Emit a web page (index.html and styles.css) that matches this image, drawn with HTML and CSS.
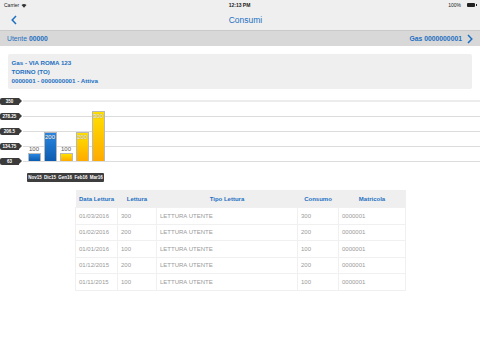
FILE: index.html
```html
<!DOCTYPE html>
<html lang="it">
<head>
    <meta charset="UTF-8">
    <title>Consumi</title>
    <link rel="stylesheet" href="styles.css">
</head>
<body class="body">
<div class="status">
    <span class="carrier">Carrier
        <svg class="wifi" width="6" height="5" viewBox="0 0 12 10"><path d="M6 9.5 L1 4 A7.5 7.5 0 0 1 11 4 Z" fill="#333"/></svg>
    </span>
    <span class="clock">12:13 PM</span>
    <span class="power">100% <span class="batt"></span></span>
</div>

<div class="nav">
    <svg class="back" width="6" height="10" viewBox="0 0 6 10"><path d="M5 1 L1.2 5 L5 9" fill="none" stroke="#1d6fc2" stroke-width="1.5"/></svg>
    <span class="title">Consumi</span>
    <span></span>
</div>

<div class="subbar">
    <span>Utente <b>00000</b></span>
    <span class="gas"><b>Gas 0000000001</b>
        <svg width="6" height="10" viewBox="0 0 6 10"><path d="M1 1 L4.8 5 L1 9" fill="none" stroke="#1d6fc2" stroke-width="1.5"/></svg>
    </span>
</div>

<div class="info">
    <div>Gas - VIA ROMA 123</div>
    <div>TORINO (TO)</div>
    <div>0000001 - 0000000001 - Attiva</div>
</div>

<div class="chart">
    <div class="axis">
        <div class="tick"><span class="pill">350</span><span class="line top"></span></div>
        <div class="tick"><span class="pill">278.25</span><span class="line"></span></div>
        <div class="tick"><span class="pill">206.5</span><span class="line"></span></div>
        <div class="tick"><span class="pill">134.75</span><span class="line"></span></div>
        <div class="tick"><span class="pill">63</span><span class="line"></span></div>
    </div>
    <div class="bars">
        <div class="slot"><span class="val">100</span><div class="bar blue" style="height:8px"></div></div>
        <div class="slot"><div class="bar blue" style="height:29px"><span class="val in">200</span></div></div>
        <div class="slot"><span class="val">100</span><div class="bar yellow" style="height:8px"></div></div>
        <div class="slot"><div class="bar yellow" style="height:29px"><span class="val in">200</span></div></div>
        <div class="slot"><div class="bar yellow" style="height:50px"><span class="val in">300</span></div></div>
    </div>
</div>
<div class="xlabels">
    <span>Nov15</span><span>Dic15</span><span>Gen16</span><span>Feb16</span><span>Mar16</span>
</div>

<table class="letture">
    <thead>
    <tr>
        <th class="c1">Data Lettura</th>
        <th class="c2">Lettura</th>
        <th class="c3">Tipo Lettura</th>
        <th class="c4">Consumo</th>
        <th class="c5">Matricola</th>
    </tr>
    </thead>
    <tbody>
    <tr><td>01/03/2016</td><td>300</td><td>LETTURA UTENTE</td><td>300</td><td>0000001</td></tr>
    <tr><td>01/02/2016</td><td>200</td><td>LETTURA UTENTE</td><td>200</td><td>0000001</td></tr>
    <tr><td>01/01/2016</td><td>100</td><td>LETTURA UTENTE</td><td>100</td><td>0000001</td></tr>
    <tr><td>01/12/2015</td><td>200</td><td>LETTURA UTENTE</td><td>200</td><td>0000001</td></tr>
    <tr><td>01/11/2015</td><td>100</td><td>LETTURA UTENTE</td><td>100</td><td>0000001</td></tr>
    </tbody>
</table>
</body>
</html>
```

FILE: styles.css
```css
.body{
    margin:0;
    width:480px;
    height:360px;
    background:#fff;
    font-family:"Liberation Sans", Helvetica, Arial, sans-serif;
    color:#1d6fc2;
    overflow:hidden;
}
.status{
    height:10px;
    background:#efefef;
    display:grid;
    grid-template-columns:1fr auto 1fr;
    align-items:center;
    padding:0 5px 0 4px;
    font-size:5px;
    color:#222;
}
.carrier{
    display:flex;
    align-items:center;
    gap:2px;
}
.clock{
    font-weight:bold;
}
.power{
    justify-self:end;
    display:flex;
    align-items:center;
    gap:6px;
}
.batt{
    width:8px;
    height:4px;
    background:#222;
    border-radius:1px;
    position:relative;
}
.batt::after{
    content:"";
    position:absolute;
    right:-1.5px;
    top:1px;
    width:1px;
    height:2px;
    background:#222;
}
.nav{
    height:20px;
    background:#efefef;
    border-bottom:1px solid #c9c9c9;
    display:grid;
    grid-template-columns:1fr auto 1fr;
    align-items:center;
    padding:0 0 0 11px;
}
.title{
    font-size:8.5px;
    font-weight:500;
}
.subbar{
    height:15px;
    background:#d8d8d8;
    display:flex;
    justify-content:space-between;
    align-items:center;
    padding:0 7px 0 7px;
    font-size:6.8px;
}
.gas{
    display:flex;
    align-items:center;
    gap:5px;
}
.info{
    margin:8px 8px 0 7.5px;
    padding:4px 4px;
    background:#efefef;
    border-radius:2px;
    font-size:6.2px;
    font-weight:bold;
    line-height:9px;
}
.chart{
    position:relative;
    margin-top:8px;
}
.axis{
    display:flex;
    flex-direction:column;
    gap:7px;
}
.tick{
    height:8px;
    display:flex;
    align-items:center;
}
.pill{
    position:relative;
    width:19px;
    height:7px;
    background:#3b3b3b;
    border-radius:2px 0 0 2px;
    color:#fff;
    font-size:4.5px;
    font-weight:bold;
    display:flex;
    align-items:center;
    justify-content:center;
}
.pill::after{
    content:"";
    position:absolute;
    right:-3px;
    top:0;
    border-left:3px solid #3b3b3b;
    border-top:3.5px solid transparent;
    border-bottom:3.5px solid transparent;
}
.line{
    flex:1;
    height:1px;
    margin-left:4px;
    background:#dcdcdc;
}
.line.top{
    height:2px;
    background:#ececec;
}
.bars{
    position:absolute;
    left:26px;
    bottom:4px;
    display:flex;
    align-items:flex-end;
}
.slot{
    width:16px;
    display:flex;
    flex-direction:column;
    align-items:center;
}
.bar{
    width:13px;
    box-sizing:border-box;
    border:1px solid #b8b8b8;
    border-bottom:none;
    display:flex;
    justify-content:center;
}
.blue{
    background:linear-gradient(#2a86e0, #0b5cb0);
}
.yellow{
    background:linear-gradient(#ffe000, #ffaa00);
}
.val{
    font-size:6px;
    color:#555;
    line-height:7px;
}
.val.in{
    color:#fff;
    margin-top:1px;
    text-shadow:0 0 1px #555;
}
.xlabels{
    margin:8px 0 0 27px;
    width:77px;
    height:9px;
    background:#3d3d3d;
    border-radius:1px;
    display:flex;
    align-items:center;
    justify-content:space-around;
    color:#fff;
    font-size:4.5px;
    font-weight:bold;
}
.letture{
    margin:8px 0 0 75px;
    width:330px;
    border-collapse:collapse;
    table-layout:fixed;
    font-size:6px;
}
.letture th{
    height:17px;
    padding:0;
    background:#efefef;
    font-weight:bold;
    text-align:center;
}
.letture td{
    height:15.5px;
    padding:0 0 0 3px;
    border:1px solid #f0f0f0;
    color:#9a9a9a;
    text-align:left;
}
.c1{ width:42px; }
.c2{ width:39px; }
.c3{ width:141px; }
.c4{ width:41px; }
.c5{ width:67px; }
```
